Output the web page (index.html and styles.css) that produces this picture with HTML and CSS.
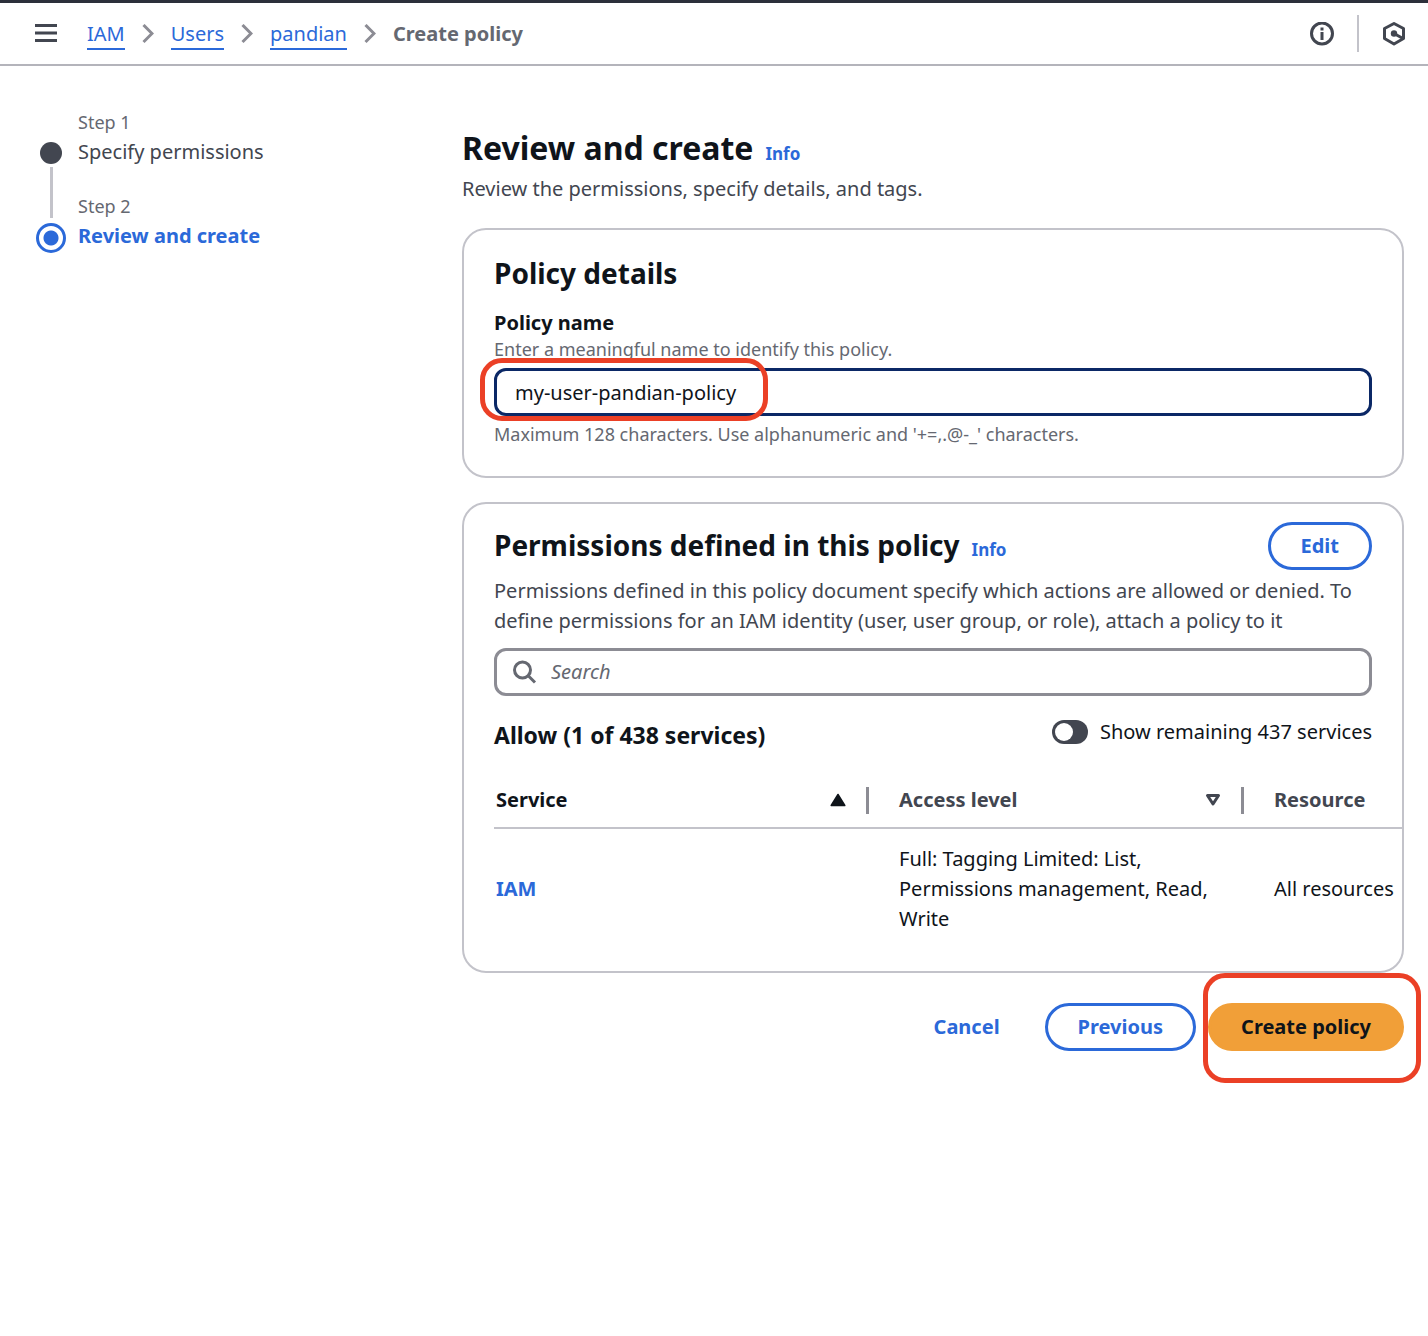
FILE: index.html
```html
<!DOCTYPE html>
<html lang="en">
<head>
<meta charset="utf-8">
<meta name="viewport" content="width=device-width, initial-scale=1">
<title>Create policy | IAM</title>
<link rel="stylesheet" href="styles.css">
</head>
<body>
<header class="topbar">
  <button class="icon-button" type="button" aria-label="Open navigation">
    <svg width="22" height="20" viewBox="0 0 22 20" fill="none" stroke="currentColor" stroke-width="3"><path d="M0 1.500h22M0 9h22M0 16.500h22"/></svg>
  </button>
  <nav class="breadcrumbs" aria-label="Breadcrumbs">
    <a class="crumb" href="#iam">IAM</a>
    <svg class="chevron" width="12" height="20" viewBox="0 0 12 20"><path d="M1.500 1L10 9.500 1.500 18"/></svg>
    <a class="crumb" href="#users">Users</a>
    <svg class="chevron" width="12" height="20" viewBox="0 0 12 20"><path d="M1.500 1L10 9.500 1.500 18"/></svg>
    <a class="crumb" href="#pandian">pandian</a>
    <svg class="chevron" width="12" height="20" viewBox="0 0 12 20"><path d="M1.500 1L10 9.500 1.500 18"/></svg>
    <span class="crumb-current" aria-current="page">Create policy</span>
  </nav>
  <div class="tools">
    <button class="icon-button" type="button" aria-label="Help">
      <svg width="24" height="24" viewBox="0 0 24 24" fill="none" stroke="currentColor" stroke-width="3"><circle cx="12" cy="11.500" r="10.500"/><path d="M12 10v8M12 5.500v3"/></svg>
    </button>
    <span class="tools-divider"></span>
    <button class="icon-button" type="button" aria-label="Diagnostics">
      <svg width="24" height="24" viewBox="0 0 24 24" fill="none" stroke="currentColor" stroke-width="3" stroke-linejoin="round"><path d="M12 1.500l9.500 5v10L12 22l-9.500-5.500v-10z"/><path d="M12 11.500l9 5"/><circle cx="12" cy="11.500" r="3.200" fill="currentColor" stroke="none"/></svg>
    </button>
  </div>
</header>

<div class="layout">
  <nav aria-label="Steps">
    <ol class="steps">
      <li class="step">
        <span class="step-number">Step 1</span>
        <span class="marker marker-done"></span>
        <a class="step-title" href="#step-1">Specify permissions</a>
      </li>
      <li class="step">
        <span class="connector"></span>
        <span class="step-number step-next">Step 2</span>
        <span class="marker marker-active"></span>
        <span class="step-title step-current" aria-current="step">Review and create</span>
      </li>
    </ol>
  </nav>

  <main class="content">
    <div class="title-row">
      <h1>Review and create</h1>
      <a class="info" href="#info-review">Info</a>
    </div>
    <p class="text">Review the permissions, specify details, and tags.</p>

    <section class="card details">
      <h2>Policy details</h2>
      <label class="label" for="policy-name">Policy name</label>
      <p class="hint" id="name-hint">Enter a meaningful name to identify this policy.</p>
      <div class="field">
        <input class="name-input" id="policy-name" type="text" value="my-user-pandian-policy" aria-describedby="name-hint name-rule">
        <span class="highlight highlight-name"></span>
      </div>
      <p class="hint" id="name-rule">Maximum 128 characters. Use alphanumeric and '+=,.@-_' characters.</p>
    </section>

    <section class="card permissions">
      <div class="card-head">
        <div class="title-row">
          <h2>Permissions defined in this policy</h2>
          <a class="info" href="#info-permissions">Info</a>
        </div>
        <button class="button" type="button">Edit</button>
      </div>
      <p class="text description">Permissions defined in this policy document specify which actions are allowed or denied. To define permissions for an IAM identity (user, user group, or role), attach a policy to it</p>
      <div class="search">
        <svg width="24" height="24" viewBox="0 0 24 24" fill="none" stroke="currentColor" stroke-width="3"><circle cx="9.500" cy="10" r="8"/><path d="M15 15.500l7 7"/></svg>
        <input class="search-input" type="search" placeholder="Search" aria-label="Search">
      </div>
      <div class="allow-row">
        <h3>Allow (1 of 438 services)</h3>
        <label class="toggle-label"><input class="toggle" type="checkbox" role="switch">Show remaining 437 services</label>
      </div>
      <div class="table-scroll">
        <table>
          <colgroup><col class="col-wide"><col class="col-wide"><col class="col-last"></colgroup>
          <thead>
            <tr>
              <th scope="col" aria-sort="ascending">
                <button class="sort sorted" type="button">Service
                  <svg width="16" height="14" viewBox="0 0 16 14"><path d="M8 1.500L14.800 12.500H1.200z" fill="currentColor" stroke="currentColor" stroke-width="1.500" stroke-linejoin="round"/></svg>
                </button>
              </th>
              <th scope="col">
                <button class="sort" type="button">Access level
                  <svg width="16" height="14" viewBox="0 0 16 14"><path d="M8 11L2.500 2.500h11z" fill="none" stroke="currentColor" stroke-width="3" stroke-linejoin="round"/></svg>
                </button>
              </th>
              <th scope="col"><span class="plain">Resource</span></th>
            </tr>
          </thead>
          <tbody>
            <tr>
              <td><a class="service" href="#service-iam">IAM</a></td>
              <td>Full: Tagging Limited: List, Permissions management, Read, Write</td>
              <td>All resources</td>
            </tr>
          </tbody>
        </table>
      </div>
    </section>

    <div class="actions">
      <button class="button button-link" type="button">Cancel</button>
      <button class="button" type="button">Previous</button>
      <div class="field">
        <button class="button button-primary" type="submit">Create policy</button>
        <span class="highlight highlight-create"></span>
      </div>
    </div>
  </main>
</div>
</body>
</html>
```
FILE: styles.css
```css
:root {
  --ink: #0f141a;
  --body: #424650;
  --muted: #656871;
  --blue: #2b69d9;
  --line: #c3c3ca;
  --line-dark: #8c8c94;
  --red: #eb4026;
}

* {
  box-sizing: border-box;
}

body {
  margin: 0;
  background: #fff;
  color: var(--ink);
  font: 20px/30px "Noto Sans", "Open Sans", sans-serif;
}

h1, h2, h3, p, ol {
  margin: 0;
}

h1 {
  font-size: 32px;
  line-height: 42px;
}

h2 {
  font-size: 28px;
  line-height: 36px;
}

h3 {
  font-size: 23px;
  line-height: 36px;
}

a {
  color: var(--blue);
  text-decoration: none;
}

button, input {
  font: inherit;
}

/* Top bar */
.topbar {
  display: flex;
  align-items: center;
  gap: 30px;
  height: 66px;
  padding: 0 22px 0 35px;
  border-top: 3px solid #2c303b;
  border-bottom: 2px solid #b4b4bb;
}

.icon-button {
  display: flex;
  padding: 0;
  border: 0;
  background: none;
  color: var(--body);
}

.breadcrumbs {
  display: flex;
  align-items: center;
  gap: 17px;
}

.crumb {
  margin-top: 2px;
  border-bottom: 2px solid;
  line-height: 28px;
}

.chevron {
  fill: none;
  stroke: var(--line-dark);
  stroke-width: 3;
}

.crumb-current {
  color: var(--muted);
  font-weight: 700;
}

.tools {
  display: flex;
  align-items: center;
  gap: 23px;
  margin-left: auto;
}

.tools-divider {
  width: 2px;
  height: 37px;
  background: var(--line);
}

/* Page columns */
.layout {
  display: grid;
  grid-template-columns: 402px minmax(0, 1fr);
  gap: 24px;
  padding: 44px 24px 48px 36px;
}

/* Steps */
.steps {
  display: grid;
  grid-template-columns: 30px 1fr;
  column-gap: 12px;
  padding: 0;
  list-style: none;
}

.step {
  display: contents;
}

.step-number {
  grid-column: 2;
  color: var(--muted);
  font-size: 18px;
  line-height: 24px;
}

.step-next {
  padding-top: 27px;
}

.connector {
  grid-column: 1;
  width: 3px;
  justify-self: center;
  background: var(--line);
}

.step-title {
  grid-column: 2;
  padding-top: 3px;
  color: var(--body);
}

.step-current {
  color: var(--blue);
  font-weight: 700;
}

.marker {
  grid-column: 1;
  place-self: end center;
  border-radius: 50%;
}

.marker-done {
  width: 22px;
  height: 22px;
  margin-bottom: 3px;
  background: var(--body);
}

.marker-active {
  width: 30px;
  height: 30px;
  margin-bottom: -2px;
  border: 3px solid var(--blue);
  background: radial-gradient(circle, var(--blue) 7px, #fff 8px);
}

/* Content */
.content {
  padding-top: 17px;
}

.title-row {
  display: flex;
  align-items: baseline;
  gap: 12px;
}

.info {
  font-size: 17px;
  font-weight: 700;
}

.text {
  color: var(--body);
}

.title-row + .text {
  margin-top: 5px;
}

.card {
  margin-top: 24px;
  border: 2px solid var(--line);
  border-radius: 24px;
  overflow: hidden;
}

.details {
  padding: 25px 30px 31px;
}

.label {
  display: block;
  margin-top: 17px;
  font-weight: 700;
}

.hint {
  color: var(--muted);
  font-size: 18px;
  line-height: 22px;
}

.field {
  position: relative;
}

.details .field {
  margin: 8px 0 7px;
}

.name-input {
  display: block;
  width: 100%;
  height: 48px;
  padding: 0 18px;
  border: 3px solid #0b2866;
  border-radius: 12px;
  background: #fff;
  color: var(--ink);
}

.highlight {
  position: absolute;
  border: 5px solid var(--red);
  border-radius: 22px;
  pointer-events: none;
}

.highlight-name {
  top: -10px;
  left: -14px;
  width: 288px;
  height: 63px;
}

.highlight-create {
  inset: -30px -17px -32px -5px;
}

/* Permissions card */
.permissions {
  padding: 18px 30px 22px;
}

.card-head,
.allow-row {
  display: flex;
  align-items: center;
  justify-content: space-between;
}

.button {
  display: block;
  height: 48px;
  padding: 0 30px;
  border: 3px solid var(--blue);
  border-radius: 24px;
  background: #fff;
  color: var(--blue);
  font-weight: 700;
}

.description {
  margin-top: 6px;
}

.search {
  display: flex;
  align-items: center;
  gap: 14px;
  height: 48px;
  margin-top: 12px;
  padding: 0 16px;
  border: 3px solid var(--line-dark);
  border-radius: 12px;
  color: var(--muted);
}

.search-input {
  flex: 1;
  min-width: 0;
  padding: 0;
  border: 0;
  outline: 0;
  background: none;
}

.search-input::placeholder {
  color: var(--muted);
  font-style: italic;
}

.allow-row {
  align-items: flex-start;
  margin-top: 21px;
}

.toggle-label {
  display: flex;
  align-items: center;
  gap: 12px;
}

.toggle {
  appearance: none;
  width: 36px;
  height: 24px;
  margin: 0;
  padding: 3px;
  border-radius: 12px;
  background: var(--body);
}

.toggle::before {
  content: "";
  display: block;
  width: 18px;
  height: 18px;
  border-radius: 50%;
  background: #fff;
}

.toggle:checked::before {
  margin-left: auto;
}

.table-scroll {
  margin: 18px -30px 0 0;
  overflow-x: auto;
  scrollbar-width: none;
}

table {
  width: 950px;
  min-width: 100%;
  table-layout: fixed;
  border-collapse: separate;
  border-spacing: 0;
}

.col-wide {
  width: 375px;
}

th {
  height: 58px;
  padding: 2px 0 0;
  border-bottom: 2px solid var(--line);
  color: var(--body);
  text-align: left;
}

.sort {
  display: flex;
  align-items: center;
  justify-content: space-between;
  width: 100%;
  height: 27px;
  padding: 0 20px 0 30px;
  border: 0;
  border-right: 3px solid var(--line-dark);
  background: none;
  color: inherit;
  font-weight: 700;
}

.sorted {
  padding-left: 2px;
  color: var(--ink);
}

.plain {
  padding-left: 30px;
}

td {
  padding: 15px 30px;
}

td:first-child {
  padding-left: 2px;
}

.service {
  font-weight: 700;
}

/* Footer actions */
.actions {
  display: flex;
  justify-content: flex-end;
  gap: 12px;
  margin-top: 30px;
}

.button-link {
  border-color: transparent;
}

.button-primary {
  border-color: #f19f38;
  background: #f19f38;
  color: var(--ink);
}
```
